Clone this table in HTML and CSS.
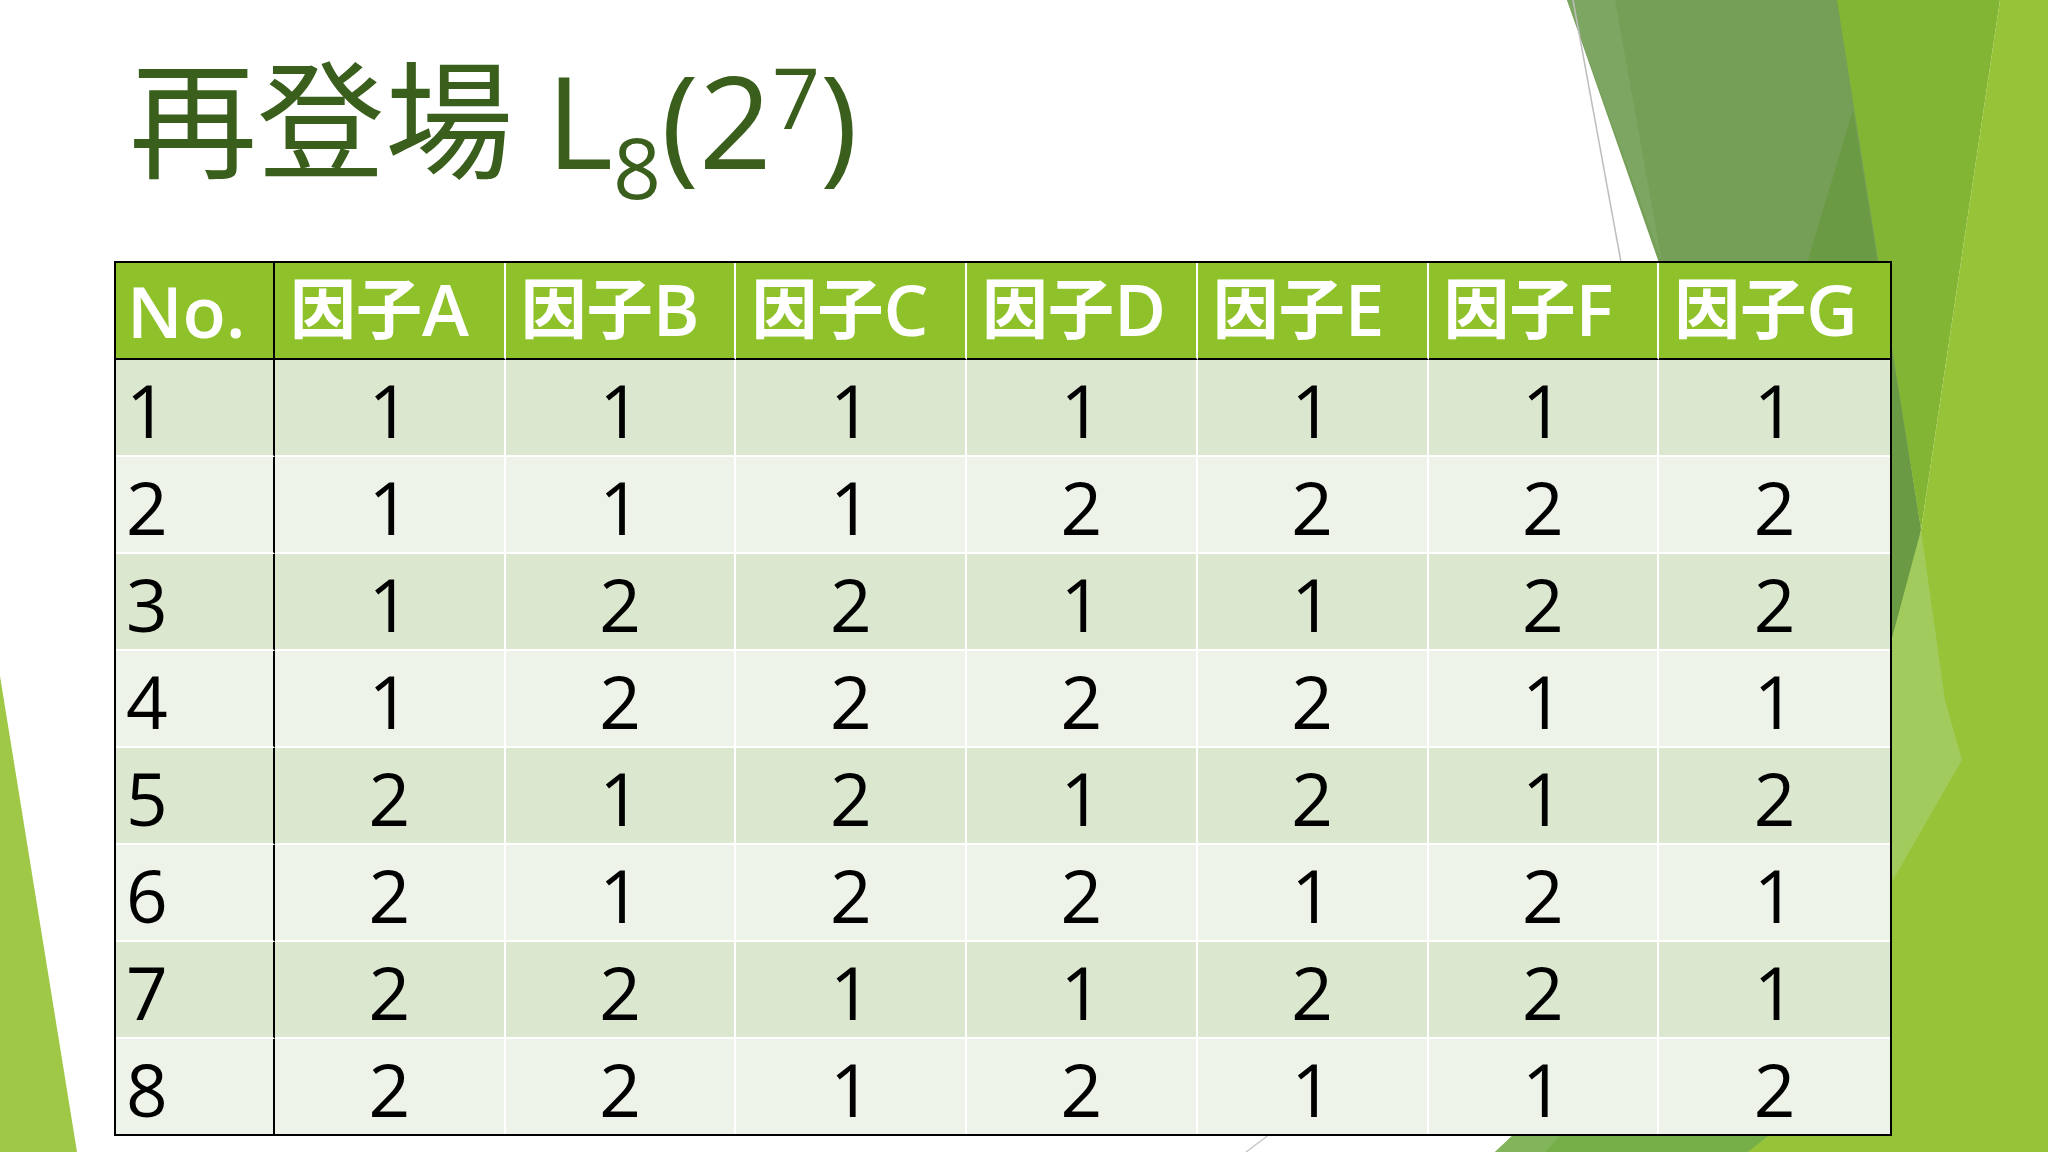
FILE: index.html
```html
<!DOCTYPE html>
<html lang="ja">
<head>
<meta charset="utf-8">
<title>再登場 L8(2^7)</title>
<link rel="stylesheet" href="styles.css">
</head>
<body>
<div class="slide">
  <svg class="deco" width="2048" height="1152" viewBox="0 0 2048 1152" xmlns="http://www.w3.org/2000/svg">
    <polygon points="1567,0 1840,0 1921,530 1700,380" fill="#759F57"/>
    <polygon points="1567,0 1615,0 1662,262" fill="#7DA663"/>
    <polygon points="1837,0 2000,0 1921,530" fill="#83B534"/>
    <polygon points="1853,110 1921,530 1880,800 1760,420" fill="#6B9A45"/>
    <polygon points="2000,0 2048,0 2048,1152 1748,1152 1880,800 1921,530" fill="#96C337"/>
    <polygon points="1921,530 1945,700 1962,760 1893,880 1870,720" fill="#A1CB5D"/>
    <polygon points="1495,1152 1540,1110 1800,1110 1748,1152" fill="#76AE48"/>
    <polygon points="1495,1152 1540,1110 1585,1110 1545,1152" fill="#82B55B"/>
    <polygon points="0,676 77,1152 0,1152" fill="#9FC846"/>
    <line x1="1573" y1="0" x2="1621" y2="262" stroke="#BDBDBD" stroke-width="1.5"/>
    <line x1="1270" y1="1134" x2="1246" y2="1152" stroke="#C8C8C8" stroke-width="1.5"/>
  </svg>

  <div class="content">
    <h1 class="title"><span class="cjk">再登場</span> L<span class="sub">8</span>(2<span class="sup">7</span>)</h1>

    <table class="grid">
      <colgroup>
        <col class="c-no">
        <col><col><col><col><col><col><col>
      </colgroup>
      <thead>
        <tr>
          <th class="first">No.</th>
          <th><span class="hj">因子</span>A</th>
          <th><span class="hj">因子</span>B</th>
          <th><span class="hj">因子</span>C</th>
          <th><span class="hj">因子</span>D</th>
          <th><span class="hj">因子</span>E</th>
          <th><span class="hj">因子</span>F</th>
          <th class="last"><span class="hj">因子</span>G</th>
        </tr>
      </thead>
      <tbody>
        <tr class="odd"><td class="first">1</td><td>1</td><td>1</td><td>1</td><td>1</td><td>1</td><td>1</td><td class="last">1</td></tr>
        <tr class="even"><td class="first">2</td><td>1</td><td>1</td><td>1</td><td>2</td><td>2</td><td>2</td><td class="last">2</td></tr>
        <tr class="odd"><td class="first">3</td><td>1</td><td>2</td><td>2</td><td>1</td><td>1</td><td>2</td><td class="last">2</td></tr>
        <tr class="even"><td class="first">4</td><td>1</td><td>2</td><td>2</td><td>2</td><td>2</td><td>1</td><td class="last">1</td></tr>
        <tr class="odd"><td class="first">5</td><td>2</td><td>1</td><td>2</td><td>1</td><td>2</td><td>1</td><td class="last">2</td></tr>
        <tr class="even"><td class="first">6</td><td>2</td><td>1</td><td>2</td><td>2</td><td>1</td><td>2</td><td class="last">1</td></tr>
        <tr class="odd"><td class="first">7</td><td>2</td><td>2</td><td>1</td><td>1</td><td>2</td><td>2</td><td class="last">1</td></tr>
        <tr class="even lastrow"><td class="first">8</td><td>2</td><td>2</td><td>1</td><td>2</td><td>1</td><td>1</td><td class="last">2</td></tr>
      </tbody>
    </table>
  </div>
</div>
</body>
</html>
```

FILE: styles.css
```css
html, body {
  margin: 0;
  padding: 0;
  background: #ffffff;
}

.slide {
  position: relative;
  width: 2048px;
  height: 1152px;
  overflow: hidden;
  background: #ffffff;
  font-family: "Open Sans", "Noto Sans CJK JP", sans-serif;
}

.deco {
  position: absolute;
  left: 0;
  top: 0;
  z-index: 0;
}

.content {
  position: relative;
  z-index: 1;
  display: flex;
  flex-direction: column;
  align-items: flex-start;
  padding-left: 114px;
}

.title {
  margin: 0;
  padding: 50px 0 0 15px;
  height: 128px;
  font-family: "Open Sans", "Noto Sans CJK JP", sans-serif;
  font-weight: 400;
  font-size: 128px;
  line-height: 128px;
  color: #3A5F1C;
  white-space: nowrap;
}

.title .cjk {
  font-family: "Noto Sans CJK JP", sans-serif;
}

.title .sub {
  font-size: 84px;
  line-height: 0;
  vertical-align: -30px;
}

.title .sup {
  font-size: 84px;
  line-height: 0;
  vertical-align: 40px;
}

.grid {
  margin-top: 83px;
  width: 1778px;
  box-sizing: border-box;
  table-layout: fixed;
  border-collapse: separate;
  border-spacing: 0;
  border: 2px solid #000000;
}

.c-no {
  width: 159px;
}

.grid th,
.grid td {
  box-sizing: border-box;
  height: 97px;
  padding: 0;
  line-height: 1;
  border-right: 2px solid #ffffff;
  border-bottom: 2px solid #ffffff;
  vertical-align: middle;
  white-space: nowrap;
}

.grid th {
  background: #8FC12A;
  color: #ffffff;
  font-family: "Open Sans", "Noto Sans CJK JP", sans-serif;
  font-weight: 600;
  font-size: 71px;
  text-align: left;
  padding: 0 0 6px 15px;
  border-bottom: 2px solid #000000;
}

.grid th .hj {
  font-family: "Noto Sans CJK JP", sans-serif;
  font-weight: 700;
  font-size: 66px;
  vertical-align: 3px;
}

.grid th.first {
  padding-left: 11px;
  padding-bottom: 0;
}

.grid td {
  color: #000000;
  font-family: "Open Sans", sans-serif;
  font-weight: 400;
  font-size: 73px;
  text-align: center;
  padding-top: 4px;
}

.grid td.first {
  text-align: left;
  padding-left: 10px;
}

.grid .first {
  border-right: 2px solid #000000;
}

.grid .last {
  border-right: none;
}

.grid .lastrow td {
  border-bottom: none;
  height: 95px;
}

.grid tr.odd td {
  background: #DCE7D0;
}

.grid tr.even td {
  background: #EEF3EA;
}
```
